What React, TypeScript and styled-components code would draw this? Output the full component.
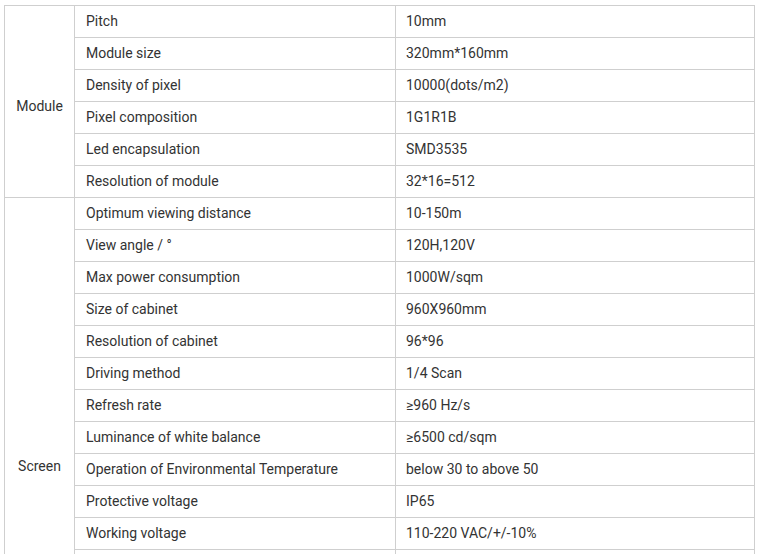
import React from "react";
import styled, { createGlobalStyle } from "styled-components";

const Global = createGlobalStyle`
  html, body { margin: 0; padding: 0; background: #fff; }
  body { padding: 5px 4px; font-family: Roboto, "Liberation Sans", Arial, sans-serif; }
`;

const Table = styled.table`
  border-collapse: collapse;
  width: 750px;
  table-layout: fixed;
  font-size: 14px;
  color: #333;
`;

const Col = styled.col<{ $w: number }>`
  width: ${(p) => p.$w}px;
`;

const Cell = styled.td<{ $tall?: boolean }>`
  border: 1px solid #cfcfcf;
  height: ${(p) => (p.$tall ? 46 : 30)}px;
  padding: 0 10px 1px 11px;
  text-align: left;
  vertical-align: middle;
  white-space: nowrap;
  overflow: hidden;
  line-height: 20px;
`;

const GroupCell = styled.td`
  border: 1px solid #cfcfcf;
  padding: 8px 0 0 0;
  text-align: center;
  vertical-align: middle;
  line-height: 20px;
`;

const ValueCell = styled(Cell)`
  padding-left: 10px;
`;

type Group = { name: string; rows: [string, string, boolean?][] };

const groups: Group[] = [
  {
    name: "Module",
    rows: [
      ["Pitch", "10mm"],
      ["Module size", "320mm*160mm"],
      ["Density of pixel", "10000(dots/m2)"],
      ["Pixel composition", "1G1R1B"],
      ["Led encapsulation", "SMD3535"],
      ["Resolution of module", "32*16=512"],
    ],
  },
  {
    name: "Screen",
    rows: [
      ["Optimum viewing distance", "10-150m"],
      ["View angle / °", "120H,120V"],
      ["Max power consumption", "1000W/sqm"],
      ["Size of cabinet", "960X960mm"],
      ["Resolution of cabinet", "96*96"],
      ["Driving method", "1/4 Scan"],
      ["Refresh rate", "≥960 Hz/s"],
      ["Luminance of white balance", "≥6500 cd/sqm"],
      ["Operation of Environmental Temperature", "below 30 to above 50"],
      ["Protective voltage", "IP65"],
      ["Working voltage", "110-220 VAC/+/-10%"],
      ["Average power consumption", "350W/sqm"],
      ["Cabinet material", "Iron"],
      ["Weight of cabinet", "45kg"],
      ["Lifetime", "100000 hours"],
      ["Maintenance", "Front and rear maintenance", true],
    ],
  },
];

export default function App() {
  return (
    <>
      <Global />
      <Table>
        <colgroup>
          <Col $w={70} />
          <Col $w={321} />
          <Col $w={359} />
        </colgroup>
        <tbody>
          {groups.map((g) =>
            g.rows.map(([k, v, tall], i) => (
              <tr key={g.name + k}>
                {i === 0 && <GroupCell rowSpan={g.rows.length}>{g.name}</GroupCell>}
                <Cell $tall={tall}>{k}</Cell>
                <ValueCell $tall={tall}>{v}</ValueCell>
              </tr>
            ))
          )}
        </tbody>
      </Table>
    </>
  );
}
